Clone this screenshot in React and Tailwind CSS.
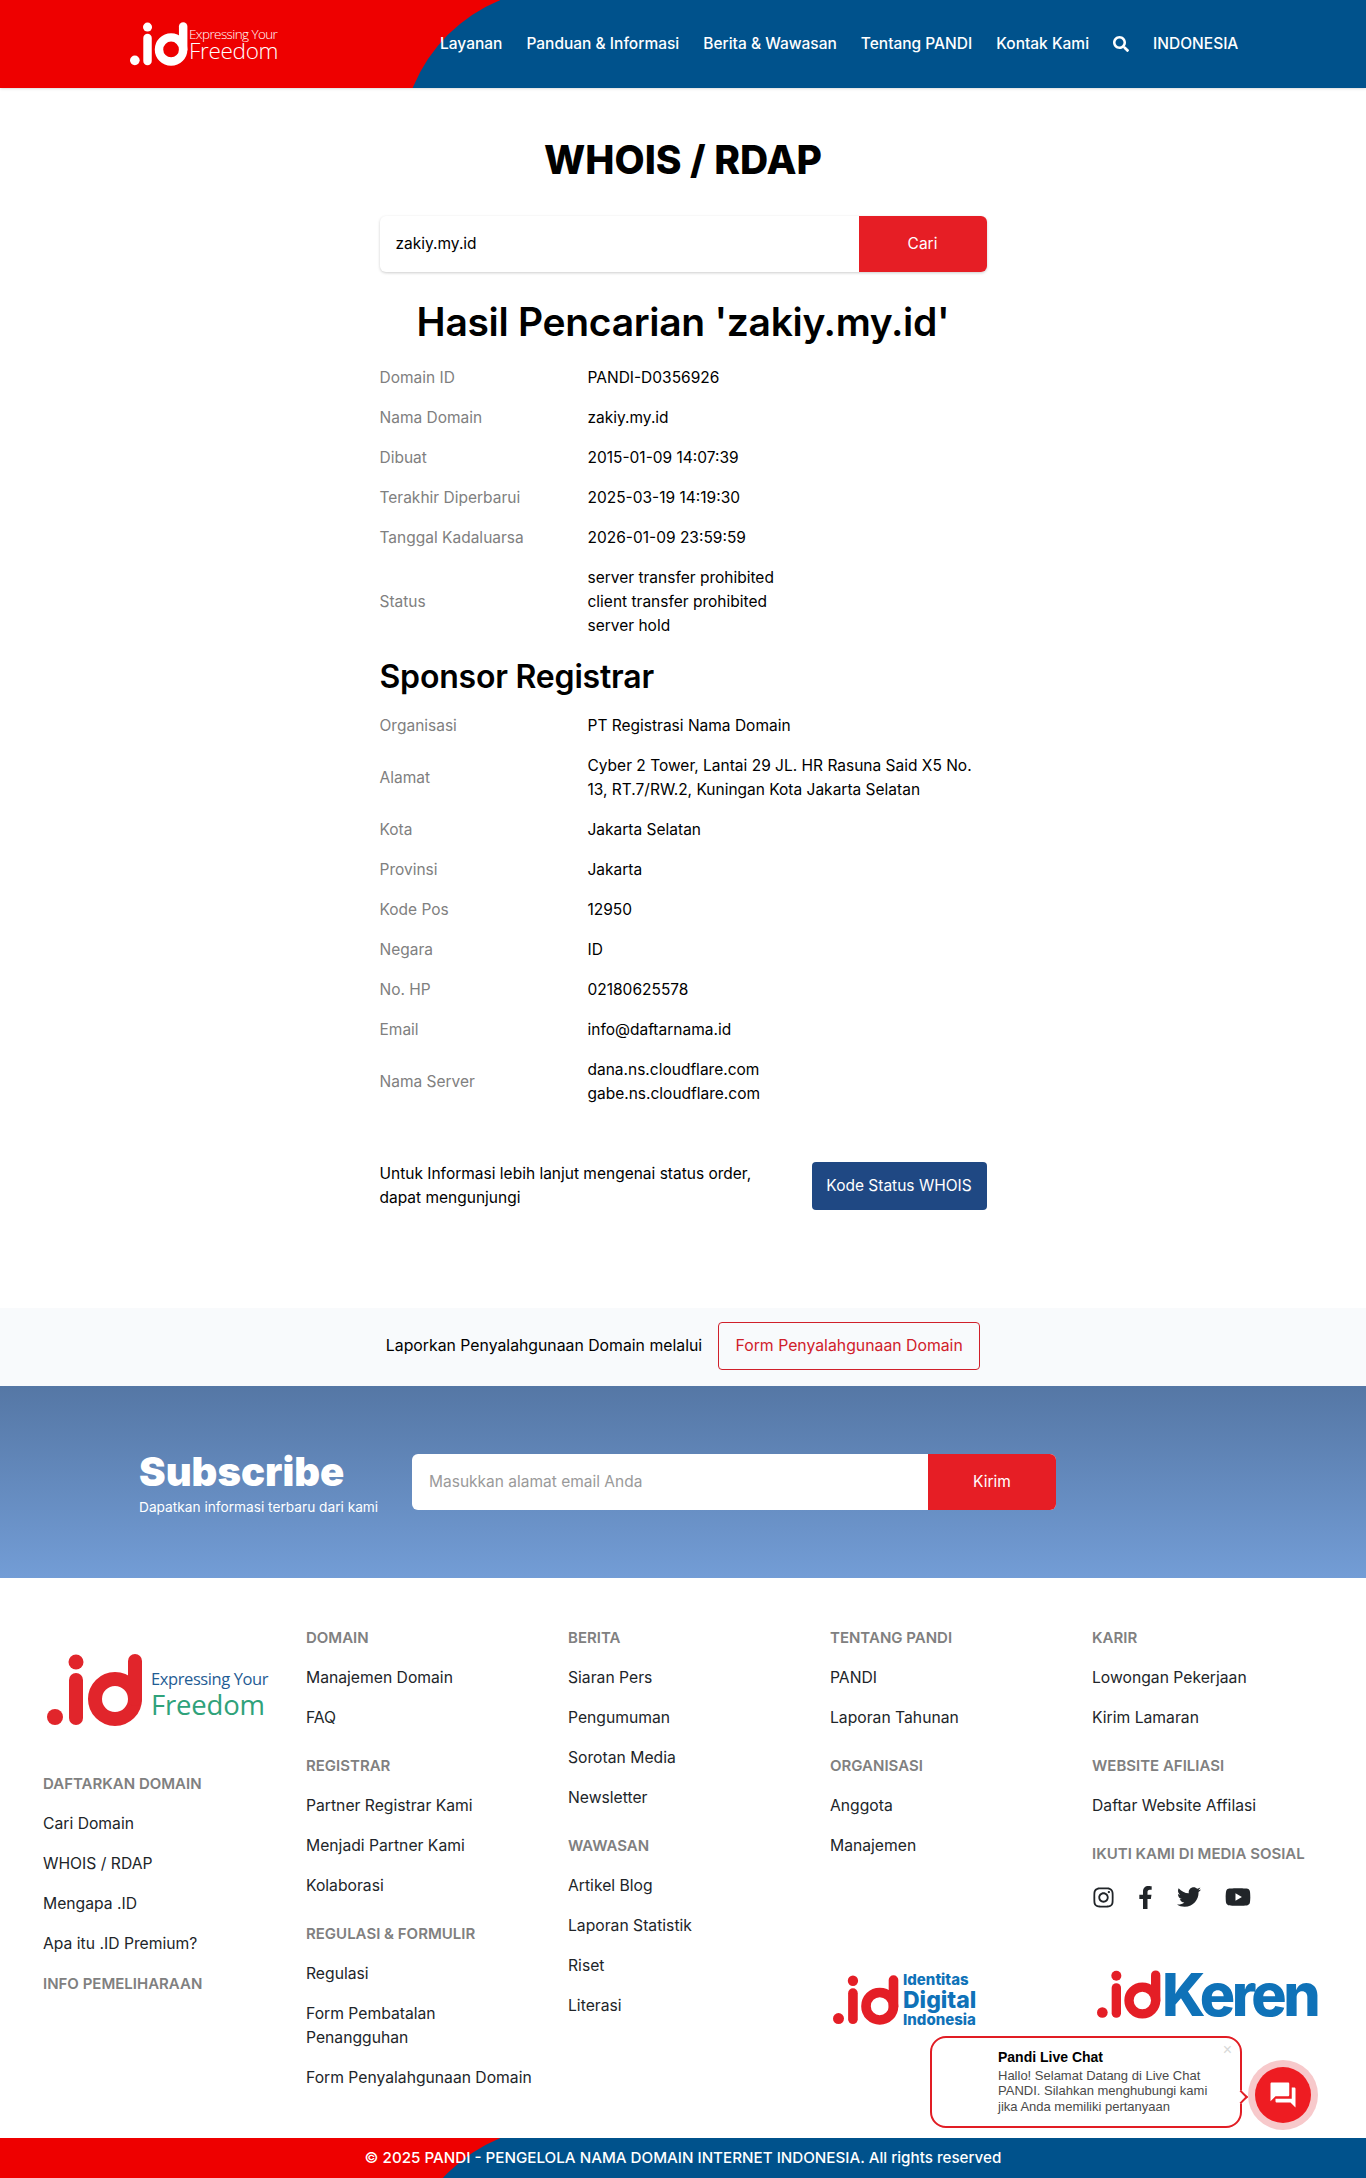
import { FaSearch, FaInstagram, FaFacebookF, FaTwitter, FaYoutube } from 'react-icons/fa';
import { MdQuestionAnswer } from 'react-icons/md';

const navItems = ['Layanan', 'Panduan & Informasi', 'Berita & Wawasan', 'Tentang PANDI', 'Kontak Kami'];

const domainRows = [
  ['Domain ID', ['PANDI-D0356926']],
  ['Nama Domain', ['zakiy.my.id']],
  ['Dibuat', ['2015-01-09 14:07:39']],
  ['Terakhir Diperbarui', ['2025-03-19 14:19:30']],
  ['Tanggal Kadaluarsa', ['2026-01-09 23:59:59']],
  ['Status', ['server transfer prohibited', 'client transfer prohibited', 'server hold']],
];

const sponsorRows = [
  ['Organisasi', ['PT Registrasi Nama Domain']],
  ['Alamat', ['Cyber 2 Tower, Lantai 29 JL. HR Rasuna Said X5 No.', '13, RT.7/RW.2, Kuningan Kota Jakarta Selatan']],
  ['Kota', ['Jakarta Selatan']],
  ['Provinsi', ['Jakarta']],
  ['Kode Pos', ['12950']],
  ['Negara', ['ID']],
  ['No. HP', ['02180625578']],
  ['Email', ['info@daftarnama.id']],
  ['Nama Server', ['dana.ns.cloudflare.com', 'gabe.ns.cloudflare.com']],
];

// .id mark, drawn from plain shapes
const IdMark = ({ color, className }) => (
  <svg viewBox="0 0 96 72" className={className} fill="none">
    <circle cx="8" cy="63" r="8" fill={color} />
    <circle cx="29" cy="8" r="7.5" fill={color} />
    <line x1="29" y1="26" x2="29" y2="64" stroke={color} strokeWidth="14" strokeLinecap="round" />
    <circle cx="68" cy="45" r="20" stroke={color} strokeWidth="14" />
    <line x1="88" y1="7" x2="88" y2="45" stroke={color} strokeWidth="14" strokeLinecap="round" />
  </svg>
);

const InfoTable = ({ rows }) => (
  <div>
    {rows.map(([label, values]) => (
      <div key={label} className="flex items-center py-2">
        <div className="w-[208px] text-[#808080]">{label}</div>
        <div className="flex-1 text-black">
          {values.map((v) => (
            <div key={v}>{v}</div>
          ))}
        </div>
      </div>
    ))}
  </div>
);

const FooterHeading = ({ children, first }) => (
  <div className={`mb-4 text-[15px] font-semibold uppercase text-[#808080] ${first ? '' : 'pt-2'}`}>{children}</div>
);

const FooterLink = ({ children }) => <div className="mb-4 whitespace-pre-line text-[15.7px] text-[#212529]">{children}</div>;

const FooterGroup = ({ title, links, first }) => (
  <div>
    <FooterHeading first={first}>{title}</FooterHeading>
    {links.map((l) => (
      <FooterLink key={l}>{l}</FooterLink>
    ))}
  </div>
);

export default function App() {
  return (
    <div className="relative w-[1366px] h-[2178px] overflow-hidden bg-white text-[15.5px] leading-6 font-['Inter',sans-serif]">
      {/* Header */}
      <header className="relative h-[88px] overflow-hidden bg-[#ee0000] shadow-sm">
        <div className="absolute left-[401px] right-0 top-[-12px] h-[200px] bg-[#00528c] rounded-tl-[160px]" />
        <div className="relative flex h-full items-center">
          <div className="ml-[130px] flex w-[310px] items-center">
            <IdMark color="#ffffff" className="h-[44px] w-[58px]" />
            <div className="ml-[1px] text-white font-['Open_Sans',sans-serif]">
              <div className="text-[13.5px] leading-[14px] tracking-[-0.6px] font-light">Expressing Your</div>
              <div className="text-[22.5px] leading-[20px] tracking-[-0.3px] font-light">Freedom</div>
            </div>
          </div>
          <nav className="flex items-center gap-6 pb-[1px] font-medium text-white">
            {navItems.map((n) => (
              <span key={n}>{n}</span>
            ))}
            <FaSearch className="h-4 w-4" />
            <span>INDONESIA</span>
          </nav>
        </div>
      </header>

      {/* Main */}
      <main className="mx-auto w-[607px] h-[1220px]">
        <h1 className="pt-[48px] text-center text-[39px] leading-[48px] font-extrabold text-black">WHOIS / RDAP</h1>
        <div className="mt-[32px] flex h-[56px] rounded-md shadow-[0_1px_3px_rgba(0,0,0,0.2)]">
          <div className="flex flex-1 items-center rounded-l-md pl-4 text-black">zakiy.my.id</div>
          <button className="w-[128px] rounded-r-md bg-[#e61e25] text-white">Cari</button>
        </div>
        <h2 className="mt-[26px] text-center text-[39px] leading-[48px] font-semibold tracking-[-0.3px] text-black">Hasil Pencarian 'zakiy.my.id'</h2>
        <div className="mt-[12px]">
          <InfoTable rows={domainRows} />
        </div>
        <h3 className="mt-[12px] text-[32px] leading-[38px] font-semibold tracking-[-0.2px] text-black">Sponsor Registrar</h3>
        <div className="mt-[10px]">
          <InfoTable rows={sponsorRows} />
        </div>
        <div className="mt-[48px] flex items-center justify-between">
          <p className="w-[400px] text-black">Untuk Informasi lebih lanjut mengenai status order, dapat mengunjungi</p>
          <button className="h-[48px] w-[175px] rounded bg-[#1f4883] text-white">Kode Status WHOIS</button>
        </div>
      </main>

      {/* Abuse report */}
      <section className="flex h-[78px] items-center justify-center gap-4 bg-[#f8fafc] pb-[2px] text-[15.8px]">
        <span className="text-black">Laporkan Penyalahgunaan Domain melalui</span>
        <button className="h-[48px] w-[262px] rounded border border-[#d0202a] text-[#d0202a]">Form Penyalahgunaan Domain</button>
      </section>

      {/* Subscribe */}
      <section className="flex h-[192px] items-center bg-gradient-to-b from-[#5577a5] to-[#739dd6] pl-[139px]">
        <div className="w-[273px] text-white">
          <div className="text-[40px] leading-[48px] font-black">Subscribe</div>
          <div className="mt-[1px] text-[13.7px] leading-5">Dapatkan informasi terbaru dari kami</div>
        </div>
        <div className="flex h-[56px] w-[644px] rounded-md bg-white">
          <div className="flex flex-1 items-center pl-[17px] text-[#9a9a9a]">Masukkan alamat email Anda</div>
          <button className="w-[128px] rounded-r-md bg-[#e61e25] text-white">Kirim</button>
        </div>
      </section>

      {/* Footer */}
      <footer className="grid h-[560px] grid-cols-[263px_262px_262px_262px_262px] pl-[43px] pt-[48px]">
        <div>
          <div className="ml-[4px] mt-[28px] flex h-[90px] items-start">
            <IdMark color="#e1252b" className="h-[72px] w-[96px]" />
            <div className="ml-[8px] mt-[14px] font-['Open_Sans',sans-serif]">
              <div className="text-[16.5px] leading-[22px] tracking-[-0.4px] text-[#1f5c94]">Expressing Your</div>
              <div className="text-[27.5px] leading-[30px] tracking-[-0.2px] text-[#2fa27a]">Freedom</div>
            </div>
          </div>
          <div className="mt-[28px]">
            <FooterGroup first title="Daftarkan Domain" links={['Cari Domain', 'WHOIS / RDAP', 'Mengapa .ID', 'Apa itu .ID Premium?']} />
            <FooterHeading first>Info Pemeliharaan</FooterHeading>
          </div>
        </div>

        <div>
          <FooterGroup first title="Domain" links={['Manajemen Domain', 'FAQ']} />
          <FooterGroup title="Registrar" links={['Partner Registrar Kami', 'Menjadi Partner Kami', 'Kolaborasi']} />
          <FooterGroup title="Regulasi & Formulir" links={['Regulasi', 'Form Pembatalan\nPenangguhan', 'Form Penyalahgunaan Domain']} />
        </div>

        <div>
          <FooterGroup first title="Berita" links={['Siaran Pers', 'Pengumuman', 'Sorotan Media', 'Newsletter']} />
          <FooterGroup title="Wawasan" links={['Artikel Blog', 'Laporan Statistik', 'Riset', 'Literasi']} />
        </div>

        <div>
          <FooterGroup first title="Tentang PANDI" links={['PANDI', 'Laporan Tahunan']} />
          <FooterGroup title="Organisasi" links={['Anggota', 'Manajemen']} />
          <div className="ml-[3px] mt-[114px] flex items-center">
            <IdMark color="#e41e26" className="h-[50px] w-[66px]" />
            <div className="ml-[4px] font-extrabold text-[#0f72b8]">
              <div className="text-[15px] leading-[16px]">Identitas</div>
              <div className="text-[23px] leading-[24px]">Digital</div>
              <div className="text-[15px] leading-[16px]">Indonesia</div>
            </div>
          </div>
        </div>

        <div>
          <FooterGroup first title="Karir" links={['Lowongan Pekerjaan', 'Kirim Lamaran']} />
          <FooterGroup title="Website Afiliasi" links={['Daftar Website Affilasi']} />
          <FooterHeading>Ikuti Kami di Media Sosial</FooterHeading>
          <div className="flex h-[27px] items-center pt-[3px] text-[#212529]">
            <FaInstagram className="h-[23px] w-[23px]" />
            <FaFacebookF className="ml-[22px] h-[23px] w-[17px]" />
            <FaTwitter className="ml-[23px] h-[24px] w-[24px]" />
            <FaYoutube className="ml-[24px] h-[26px] w-[26px]" />
          </div>
          <div className="ml-[5px] mt-[60px] flex items-end">
            <IdMark color="#e41e26" className="h-[51px] w-[64px]" />
            <div className="ml-[1px] text-[59px] leading-[50px] font-extrabold tracking-[-3.5px] text-[#0f72b8]">Keren</div>
          </div>
        </div>
      </footer>

      {/* Bottom bar */}
      <div className="relative h-[40px] overflow-hidden bg-[#ee0000]">
        <div className="absolute left-[401px] right-0 top-[-12px] h-[200px] bg-[#00528c] rounded-tl-[160px]" />
        <div className="relative text-center text-[15.2px] font-medium leading-[40px] text-white">© 2025 PANDI - PENGELOLA NAMA DOMAIN INTERNET INDONESIA. All rights reserved</div>
      </div>

      {/* Live chat */}
      <div className="absolute left-[930px] top-[2036px] h-[92px] w-[312px] rounded-[16px] border-2 border-[#e11d24] bg-white pl-[66px] pt-[11px] font-['Liberation_Sans',sans-serif]">
        <div className="text-[14px] leading-[16px] font-bold text-black">Pandi Live Chat</div>
        <div className="mt-[3px] w-[216px] text-[13px] leading-[15.3px] text-[#4a4a4a]">Hallo! Selamat Datang di Live Chat PANDI. Silahkan menghubungi kami jika Anda memiliki pertanyaan</div>
        <span className="absolute right-[8px] top-[4px] text-[16px] leading-[16px] text-[#d8d8d8]">×</span>
        <span className="absolute right-[-6px] top-[54px] h-[10px] w-[10px] rotate-45 border-r-2 border-t-2 border-[#e11d24] bg-white" />
      </div>
      <div className="absolute left-[1248px] top-[2060px] flex h-[70px] w-[70px] items-center justify-center rounded-full bg-[#f7c9cb]">
        <div className="flex h-[56px] w-[56px] items-center justify-center rounded-full bg-[#ee1c22]">
          <MdQuestionAnswer className="h-[30px] w-[30px] text-white" />
        </div>
      </div>
    </div>
  );
}
